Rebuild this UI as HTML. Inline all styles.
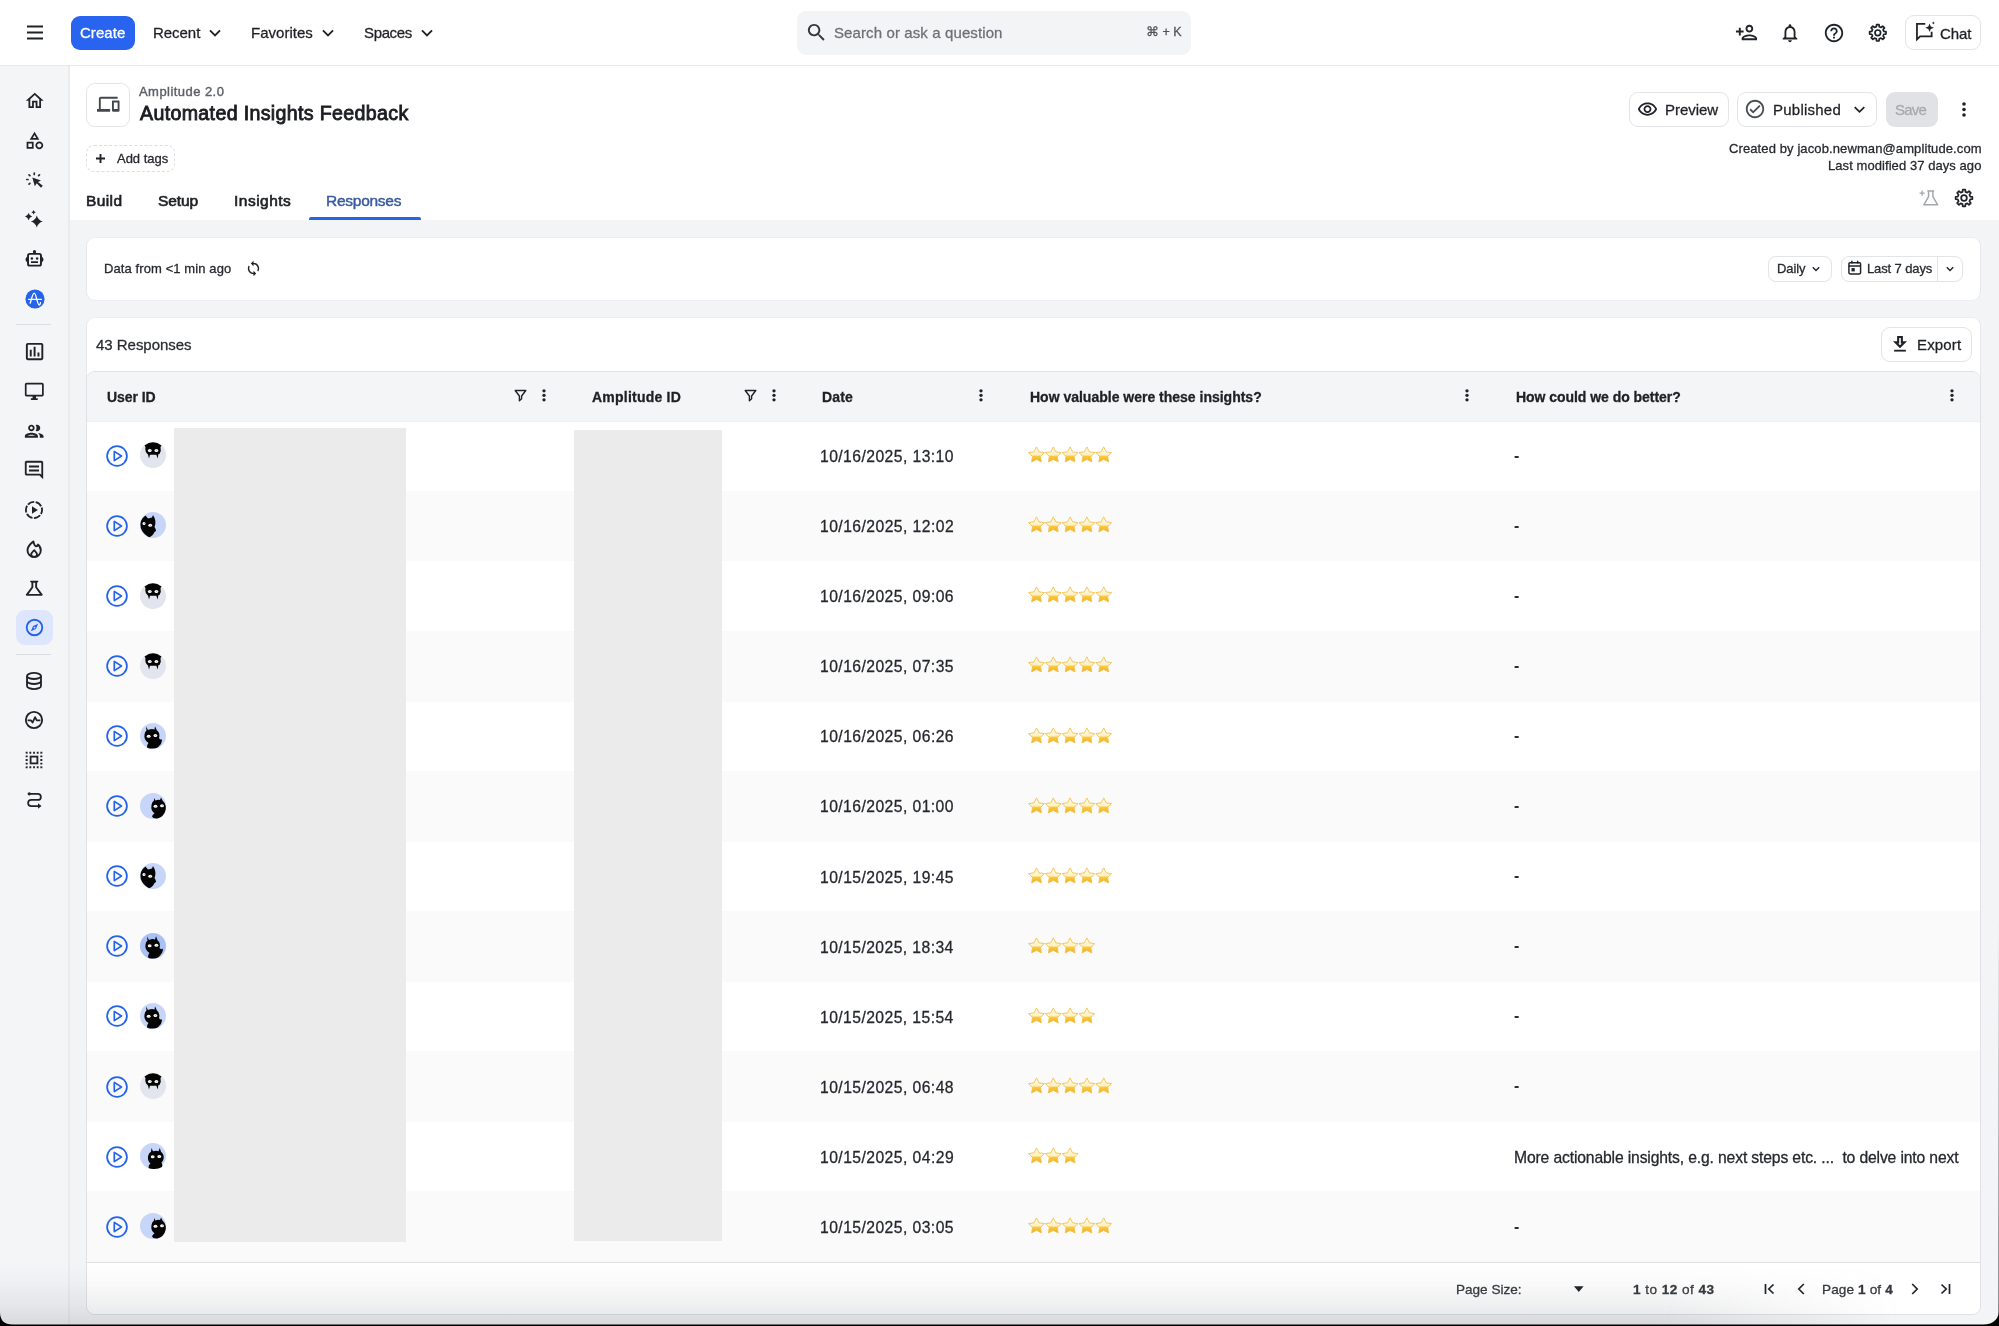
<!DOCTYPE html>
<html lang="en">
<head>
<meta charset="utf-8">
<title>Automated Insights Feedback</title>
<style>
*{box-sizing:border-box;margin:0;padding:0}
html,body{width:1999px;height:1326px;overflow:hidden;background:#fff}
body{font-family:"Liberation Sans",sans-serif;color:#1e2024;position:relative;font-size:16px}
.abs{position:absolute}
.t{position:absolute;white-space:pre;line-height:1;will-change:transform;-webkit-text-stroke:0.28px currentColor}
svg{position:absolute;overflow:visible}
#topbar{position:absolute;left:0;top:0;width:1999px;height:66px;background:#fff;border-bottom:1px solid #e8e9ec}
#sidebar{position:absolute;left:0;top:66px;width:70px;height:1260px;background:#f4f5f7;border-right:2px solid #eaebed}
#head{position:absolute;left:70px;top:66px;width:1929px;height:154px;background:#fff}
#content{position:absolute;left:70px;top:220px;width:1929px;height:1106px;background:#f3f4f6}
.card{position:absolute;background:#fff;border:1px solid #e6e7ea;border-radius:9px}
.btn{position:absolute;border:1px solid #e3e4e7;border-radius:8px;background:#fff}
</style>
</head>
<body>
<div id="topbar"></div>
<div id="sidebar"></div>
<div id="head"></div>
<div id="content"></div>
<div id="tb">
<svg style="left:26px;top:24px" width="18" height="18" viewBox="0 0 18 18" ><path d="M1 2.6H17M1 8.6H17M1 14.6H17" stroke="#1f2328" stroke-width="2" fill="none"/></svg>
<div class="abs" style="left:71px;top:15.500px;width:64px;height:34.800px;border-radius:9px;background:#2864f0"></div>
<div class="t" style="left:79.99px;top:25.30px;font-size:15px;color:#fff;letter-spacing:0.042px;">Create</div>
<div class="t" style="left:153.04px;top:25.30px;font-size:15px;color:#1e2024;letter-spacing:-0.043px;">Recent</div>
<svg style="left:203.5px;top:21.5px" width="22" height="22" viewBox="0 0 24 24" ><path d="M6.5 9.2 L12 14.7 L17.5 9.2" fill="none" stroke="#1f2328" stroke-width="2" /></svg>
<div class="t" style="left:251.04px;top:25.30px;font-size:15px;color:#1e2024;letter-spacing:0.007px;">Favorites</div>
<svg style="left:316.5px;top:21.5px" width="22" height="22" viewBox="0 0 24 24" ><path d="M6.5 9.2 L12 14.7 L17.5 9.2" fill="none" stroke="#1f2328" stroke-width="2" /></svg>
<div class="t" style="left:363.56px;top:25.30px;font-size:15px;color:#1e2024;letter-spacing:-0.361px;">Spaces</div>
<svg style="left:415.5px;top:21.5px" width="22" height="22" viewBox="0 0 24 24" ><path d="M6.5 9.2 L12 14.7 L17.5 9.2" fill="none" stroke="#1f2328" stroke-width="2" /></svg>
<div class="abs" style="left:797px;top:11px;width:394px;height:43.5px;border-radius:9px;background:#f3f4f6"></div>
<svg style="left:805.3px;top:20.5px" width="23" height="23" viewBox="0 0 24 24" ><path d="M15.5 14h-.79l-.28-.27C15.41 12.59 16 11.11 16 9.500 16 5.910 13.090 3 9.500 3S3 5.910 3 9.500 5.910 16 9.500 16c1.610 0 3.090-.59 4.230-1.570l.27.28v.79l5 4.990L20.490 19l-4.990-5zm-6 0C7.010 14 5 11.990 5 9.500S7.010 5 9.500 5 14 7.010 14 9.500 11.990 14 9.500 14z" fill="#33363b" /></svg>
<div class="t" style="left:833.57px;top:25.10px;font-size:15px;color:#6d7076;letter-spacing:0.110px;">Search or ask a question</div>
<div class="t" style="left:1146.19px;top:25.92px;font-size:12.5px;color:#50535a;font-family:"Liberation Sans","DejaVu Sans",sans-serif;">⌘ + K</div>
<svg style="left:1735.0px;top:20.8px" width="23" height="23" viewBox="0 0 24 24" ><path d="M15 12c2.210 0 4-1.790 4-4s-1.790-4-4-4-4 1.790-4 4 1.790 4 4 4zm0-6c1.100 0 2 .9 2 2s-.9 2-2 2-2-.9-2-2 .9-2 2-2zm0 8c-2.670 0-8 1.340-8 4v2h16v-2c0-2.660-5.330-4-8-4zm-6 4c.22-.72 3.310-2 6-2 2.700 0 5.800 1.290 6 2H9zm-3-3v-3h3v-2H6V7H4v3H1v2h3v3z" fill="#1f2328" /></svg>
<svg style="left:1779.3px;top:22.1px" width="22" height="22" viewBox="0 0 24 24" ><path d="M12 22c1.1 0 2-.9 2-2h-4c0 1.1.9 2 2 2zm6-6v-5c0-3.07-1.63-5.64-4.5-6.32V4c0-.83-.67-1.5-1.5-1.5s-1.5.67-1.5 1.5v.68C7.64 5.36 6 7.92 6 11v5l-2 2v1h16v-1l-2-2zm-2 1H8v-6c0-2.48 1.51-4.5 4-4.5s4 2.02 4 4.5v6z" fill="#1f2328" /></svg>
<svg style="left:1823.0px;top:21.7px" width="22" height="22" viewBox="0 0 24 24" ><path d="M11 18h2v-2h-2v2zm1-16C6.48 2 2 6.48 2 12s4.48 10 10 10 10-4.48 10-10S17.52 2 12 2zm0 18c-4.41 0-8-3.59-8-8s3.59-8 8-8 8 3.59 8 8-3.59 8-8 8zm0-14c-2.21 0-4 1.79-4 4h2c0-1.1.9-2 2-2s2 .9 2 2c0 2-3 1.75-3 5h2c0-2.25 3-2.5 3-5 0-2.21-1.79-4-4-4z" fill="#1f2328" /></svg>
<svg style="left:1866.9px;top:21.9px" width="21.6" height="21.6" viewBox="0 0 24 24" ><path d="M10.39 5.29 L10.63 2.90 L13.37 2.90 L13.61 5.29 L15.61 6.12 L17.47 4.60 L19.40 6.53 L17.88 8.39 L18.71 10.39 L21.10 10.63 L21.10 13.37 L18.71 13.61 L17.88 15.61 L19.40 17.47 L17.47 19.40 L15.61 17.88 L13.61 18.71 L13.37 21.10 L10.63 21.10 L10.39 18.71 L8.39 17.88 L6.53 19.40 L4.60 17.47 L6.12 15.61 L5.29 13.61 L2.90 13.37 L2.90 10.63 L5.29 10.39 L6.12 8.39 L4.60 6.53 L6.53 4.60 L8.39 6.12Z" fill="none" stroke="#1f2328" stroke-width="1.9" stroke-linejoin="round"/><circle cx="12" cy="12" r="3.1" fill="none" stroke="#1f2328" stroke-width="1.9"/></svg>
<div class="btn" style="left:1904.5px;top:15px;width:76.5px;height:35px;border-radius:9px"></div>
<svg style="left:1913.2px;top:20.3px" width="22.6" height="22.6" viewBox="0 0 24 24" ><path d="M13 4.2H4.2V20.6L7.6 17.4H19.8V12.6" fill="none" stroke="#1f2328" stroke-width="1.9"/><path d="M17.6 3.6 L18.9 6.9 L22.2 8.2 L18.9 9.5 L17.600 12.800 L16.300 9.500 L13 8.200 L16.300 6.900Z" fill="#1f2328"/><path d="M21.6 1.4l.5 1.200 1.200.5-1.200.5-.5 1.200-.5-1.200-1.200-.5 1.200-.5z" fill="#1f2328"/></svg>
<div class="t" style="left:1939.99px;top:25.60px;font-size:15px;color:#1e2024;letter-spacing:-0.114px;">Chat</div>
</div>
<div id="sb">
<svg style="left:23.85px;top:89.65px" width="21.5" height="21.5" viewBox="0 0 24 24" ><path d="M12 5.69l5 4.5V18h-2v-6H9v6H7v-7.81l5-4.5M12 3L2 12h3v8h6v-6h2v6h6v-8h3L12 3z" fill="#1f2328" /></svg>
<svg style="left:24.1px;top:129.8px" width="21" height="21" viewBox="0 0 24 24" ><path d="M12 2l-5.5 9h11L12 2zm0 3.84L13.93 9h-3.87L12 5.84zM17.5 13c-2.49 0-4.5 2.01-4.5 4.5s2.01 4.5 4.5 4.5 4.5-2.01 4.5-4.5-2.01-4.5-4.5-4.5zm0 7c-1.38 0-2.5-1.12-2.5-2.5s1.12-2.5 2.5-2.5 2.5 1.12 2.5 2.5-1.12 2.5-2.5 2.5zM3 21.5h8v-8H3v8zm2-6h4v4H5v-4z" fill="#1f2328" /></svg>
<svg style="left:20px;top:165px" width="30" height="30" viewBox="0 0 30 30" ><path d="M12.300 12.500 L21 15.600 L18 17 L22.800 20.800 L21 22.700 L16.700 18.300 L14.800 21.200 Z" fill="#23272c"/><path d="M14.250 8.100V9.400 M9 9.800L9.900 10.700 M6.800 14.500H8 M9 19.200L9.900 18.300 M18.600 10.700L19.500 9.800" stroke="#2a2e34" stroke-width="1.700" fill="none" stroke-linecap="round"/></svg>
<svg style="left:24.8px;top:210.2px" width="18" height="18" viewBox="0 0 18 18" ><path d="M11.8 5.6 Q13.120000000000001 10.28 17.8 11.6 Q13.120000000000001 12.92 11.8 17.6 Q10.48 12.92 5.800000000000001 11.6 Q10.48 10.28 11.8 5.6Z" fill="#1f2328"/><path d="M3.6 2.9999999999999996 Q4.392 5.808 7.2 6.6 Q4.392 7.3919999999999995 3.6 10.2 Q2.808 7.3919999999999995 0.0 6.6 Q2.808 5.808 3.6 2.9999999999999996Z" fill="#1f2328"/><path d="M8.6 0.0 Q9.084 1.7160000000000002 10.8 2.2 Q9.084 2.684 8.6 4.4 Q8.116 2.684 6.3999999999999995 2.2 Q8.116 1.7160000000000002 8.6 0.0Z" fill="#1f2328"/></svg>
<svg style="left:23.6px;top:249px" width="21" height="21" viewBox="0 0 24 24" ><rect x="4.600" y="5.600" width="14.800" height="13.400" rx="2" fill="none" stroke="#1f2328" stroke-width="2.200"/><path d="M12 5V3" stroke="#1f2328" stroke-width="2.200"/><circle cx="12" cy="3" r="1.800" fill="#1f2328"/><path d="M3.600 9.500 Q1 12 3.600 14.500Z M20.400 9.500 Q23 12 20.400 14.500Z" fill="#1f2328" stroke="#1f2328" stroke-width="1.200"/><circle cx="9" cy="10.800" r="1.400" fill="#1f2328"/><circle cx="15" cy="10.800" r="1.400" fill="#1f2328"/><rect x="8" y="14" width="8" height="2" fill="#1f2328"/></svg>
<svg style="left:24.7px;top:288.7px" width="20" height="20" viewBox="0 0 20 20" ><circle cx="10" cy="10" r="9.600" fill="#2563eb"/><path d="M3.600 10.300H16.400" stroke="#fff" stroke-width="1.300" fill="none" stroke-linecap="round"/><path d="M5.200 14.200 C6.800 9 7.800 4.200 9.200 4.200 C11.200 4.200 12.200 16 14.200 16 C15 16 15.300 14.800 15.500 13.600" stroke="#fff" stroke-width="1.300" fill="none" stroke-linecap="round"/></svg>
<div class="abs" style="left:16px;top:324px;width:35px;height:1px;background:#dcdde1"></div>
<svg style="left:22.5px;top:340.1px" width="23.2" height="23.2" viewBox="0 0 24 24" ><path d="M9 17H7v-7h2v7zm4 0h-2V7h2v10zm4 0h-2v-4h2v4zm2 2H5V5h14v14zm0-16H5c-1.1 0-2 .9-2 2v14c0 1.1.9 2 2 2h14c1.1 0 2-.9 2-2V5c0-1.1-.9-2-2-2z" fill="#1f2328" /></svg>
<svg style="left:23.8px;top:381.0px" width="20.6" height="20.6" viewBox="0 0 24 24" ><path d="M21 2H3c-1.1 0-2 .9-2 2v12c0 1.1.9 2 2 2h7v2H8v2h8v-2h-2v-2h7c1.1 0 2-.9 2-2V4c0-1.1-.9-2-2-2zm0 14H3V4h18v12z" fill="#1f2328" /></svg>
<svg style="left:23.2px;top:420.1px" width="22.4" height="22.4" viewBox="0 0 24 24" ><path d="M9 13.75c-2.34 0-7 1.17-7 3.5V19h14v-1.75c0-2.33-4.66-3.5-7-3.5zM4.34 17c.84-.58 2.87-1.25 4.66-1.25s3.82.67 4.66 1.25H4.34zM9 12c1.93 0 3.5-1.57 3.5-3.5S10.930 5 9 5 5.5 6.57 5.5 8.5 7.07 12 9 12zm0-5c.83 0 1.5.67 1.5 1.5S9.83 10 9 10s-1.500-.67-1.500-1.500S8.17 7 9 7zm7.040 6.810c1.160.84 1.960 1.960 1.960 3.440V19h4v-1.750c0-2.020-3.500-3.170-5.960-3.440zM15 12c1.930 0 3.500-1.570 3.500-3.500S16.930 5 15 5c-.54 0-1.040.13-1.500.35.630.89 1 1.980 1 3.150s-.37 2.260-1 3.150c.46.22.96.35 1.500.35z" fill="#1f2328" /></svg>
<svg style="left:23.1px;top:459.0px" width="22" height="22" viewBox="0 0 24 24" ><path d="M21.990 4c0-1.100-.89-2-1.990-2H4c-1.100 0-2 .9-2 2v12c0 1.100.9 2 2 2h14l4 4-.010-18zM20 4v13.170L18.830 16H4V4h16zM6.500 11.500h11v2h-11zm0-4.300h11v2h-11z" fill="#1f2328" /></svg>
<svg style="left:23.1px;top:498.7px" width="22" height="22" viewBox="0 0 24 24" ><circle cx="12" cy="12" r="8.800" fill="none" stroke="#1f2328" stroke-width="2" stroke-dasharray="7.600 1.610" stroke-dashoffset="3"/><path d="M9.800 7.800V16.200L16.200 12Z" fill="#1f2328"/></svg>
<svg style="left:20px;top:535px" width="30" height="30" viewBox="0 0 30 30" ><path d="M13.400 6.400 C11 8.500 7.500 11 7.500 15.200 C7.500 19 10.400 21.900 14.100 21.900 C17.900 21.900 20.800 19 20.800 15.200 C20.800 12.800 19.700 10.900 17.900 9.500 C17.600 10.800 16.800 11.400 15.900 11.200 C14.400 10.900 14 9.200 13.400 6.400 Z" fill="none" stroke="#1f2328" stroke-width="1.900" stroke-linejoin="round"/><path d="M14.300 15.200 C13 16.600 11.200 17.800 11.200 19.400 C11.200 20.900 12.500 21.900 14.100 21.900 C15.700 21.900 17 20.900 17 19.400 C17 17.800 15.600 16.600 14.300 15.200Z" fill="none" stroke="#1f2328" stroke-width="1.800" stroke-linejoin="round"/></svg>
<svg style="left:23.25px;top:576.85px" width="22.5" height="22.5" viewBox="0 0 24 24" ><path d="M13 11.33L18 18H6l5-6.670V6h2m2.960-2H8.040c-.42 0-.65.48-.39.81L9 6.500v4.170L3.200 18.400c-.49.66-.02 1.600.8 1.600h16c.82 0 1.290-.94.8-1.600L15 10.670V6.500l1.350-1.690c.26-.33.030-.81-.39-.81z" fill="#1f2328" /></svg>
<div class="abs" style="left:16px;top:610px;width:37px;height:35px;border-radius:9px;background:#dde6fc"></div>
<svg style="left:23.6px;top:617.0px" width="21" height="21" viewBox="0 0 24 24" ><circle cx="12" cy="12" r="8.900" fill="none" stroke="#2563eb" stroke-width="2.100"/><path d="M16.200 7.800L13.600 13.600L7.800 16.200L10.400 10.400Z" fill="#2563eb"/><circle cx="12" cy="12" r="1" fill="#dde6fc"/></svg>
<div class="abs" style="left:16px;top:654px;width:35px;height:1px;background:#dcdde1"></div>
<svg style="left:23.3px;top:670.2px" width="22" height="22" viewBox="0 0 24 24" ><ellipse cx="12" cy="6.500" rx="7.600" ry="3.300" fill="none" stroke="#1f2328" stroke-width="2"/><path d="M4.400 6.500V17.500C4.400 19.300 8 20.800 12 20.800S19.600 19.300 19.600 17.500V6.500" fill="none" stroke="#1f2328" stroke-width="2"/><path d="M4.400 12C4.400 13.800 8 15.300 12 15.300S19.600 13.800 19.600 12" fill="none" stroke="#1f2328" stroke-width="2"/></svg>
<svg style="left:23.1px;top:709.4px" width="22" height="22" viewBox="0 0 24 24" ><circle cx="12" cy="12" r="8.900" fill="none" stroke="#1f2328" stroke-width="2"/><path d="M5 12.300H8.600L10.400 14.800L13.200 8.800L15 12.300H19" fill="none" stroke="#1f2328" stroke-width="1.900" stroke-linejoin="round"/></svg>
<svg style="left:23.3px;top:748.8px" width="22" height="22" viewBox="0 0 24 24" ><rect x="4" y="4" width="16" height="16" fill="none" stroke="#1f2328" stroke-width="2.200" stroke-dasharray="2 2" stroke-dashoffset="1"/><rect x="8.300" y="8.300" width="7.400" height="7.400" fill="none" stroke="#1f2328" stroke-width="2"/></svg>
<svg style="left:24.2px;top:788.5px" width="21" height="21" viewBox="0 0 24 24" ><path d="M7 5.500H15.500C17.700 5.500 19.300 7 19.300 9C19.300 11 17.700 12.500 15.500 12.500H8.500C6.300 12.500 4.700 14 4.700 16C4.700 18 6.300 19.500 8.500 19.500H16" fill="none" stroke="#1f2328" stroke-width="2"/><path d="M16 16.300L20 19.500L16 22.700Z" fill="#1f2328"/><circle cx="6" cy="5.500" r="1.900" fill="#1f2328"/></svg>
</div>
<div id="hd">
<div class="btn" style="left:86px;top:83px;width:43.5px;height:43.5px;border-radius:9px"></div>
<svg style="left:96.95px;top:93.45px" width="22.5" height="22.5" viewBox="0 0 24 24" ><path d="M4 6h18V4H4c-1.100 0-2 .9-2 2v11H0v3h14v-3H4V6zm19 2h-6c-.55 0-1 .45-1 1v10c0 .55.45 1 1 1h6c.55 0 1-.45 1-1V9c0-.55-.45-1-1-1zm-1 9h-4v-7h4v7z" fill="#44474d" /></svg>
<div class="t" style="left:138.80px;top:84.70px;font-size:13px;color:#5e6167;letter-spacing:0.449px;-webkit-text-stroke:0.4px #5e6167;">Amplitude 2.0</div>
<div class="t" style="left:140.33px;top:104.01px;font-size:19.6px;color:#1b1d21;letter-spacing:0.346px;-webkit-text-stroke:0.85px #1b1d21;">Automated Insights Feedback</div>
<div class="abs" style="left:86px;top:145px;width:89px;height:27px;border:1px dashed #dcdee2;border-radius:8px"></div>
<svg style="left:95.5px;top:154px" width="9" height="9" viewBox="0 0 9 9" ><path d="M4.5 0V9M0 4.5H9" stroke="#1f2328" stroke-width="1.9" fill="none"/></svg>
<div class="t" style="left:117.34px;top:152.00px;font-size:13px;color:#26292e;letter-spacing:-0.020px;">Add tags</div>
<div class="t" style="left:86.19px;top:192.98px;font-size:15.5px;color:#1e2024;letter-spacing:0.403px;-webkit-text-stroke:0.65px #1e2024;">Build</div>
<div class="t" style="left:158.13px;top:192.98px;font-size:15.5px;color:#1e2024;letter-spacing:-0.107px;-webkit-text-stroke:0.65px #1e2024;">Setup</div>
<div class="t" style="left:233.73px;top:192.98px;font-size:15.5px;color:#1e2024;letter-spacing:0.493px;-webkit-text-stroke:0.65px #1e2024;">Insights</div>
<div class="t" style="left:326.29px;top:192.98px;font-size:15.5px;color:#3a5ba0;letter-spacing:-0.263px;-webkit-text-stroke:0.45px #3a5ba0;">Responses</div>
<div class="abs" style="left:308.7px;top:217px;width:112.2px;height:2.800px;background:#2563eb;border-radius:2px 2px 0 0"></div>
<div class="btn" style="left:1629px;top:92px;width:99.5px;height:34.5px;border-radius:9px"></div>
<svg style="left:1636.7px;top:98.7px" width="21" height="21" viewBox="0 0 24 24" ><path d="M12 6c3.790 0 7.170 2.130 8.820 5.500C19.170 14.870 15.790 17 12 17s-7.170-2.130-8.820-5.500C4.830 8.130 8.210 6 12 6m0-2C7 4 2.730 7.110 1 11.500 2.730 15.890 7 19 12 19s9.270-3.110 11-7.500C21.270 7.110 17 4 12 4zm0 5c1.380 0 2.500 1.120 2.500 2.500S13.380 14 12 14s-2.500-1.120-2.500-2.500S10.620 9 12 9m0-2c-2.480 0-4.500 2.020-4.500 4.500S9.520 16 12 16s4.500-2.020 4.500-4.500S14.480 7 12 7z" fill="#1f2328" /></svg>
<div class="t" style="left:1664.54px;top:101.50px;font-size:15px;color:#1e2024;letter-spacing:-0.030px;">Preview</div>
<div class="btn" style="left:1736.5px;top:92px;width:140px;height:34.5px;border-radius:9px"></div>
<svg style="left:1744.1px;top:98.2px" width="22" height="22" viewBox="0 0 24 24" ><path d="M12 2C6.480 2 2 6.480 2 12s4.480 10 10 10 10-4.480 10-10S17.520 2 12 2zm0 18c-4.410 0-8-3.590-8-8s3.590-8 8-8 8 3.590 8 8-3.590 8-8 8zm4.590-12.420L10 14.170l-2.590-2.580L6 13l4 4 8-8z" fill="#4b4e54" /></svg>
<div class="t" style="left:1772.94px;top:101.50px;font-size:15px;color:#1e2024;letter-spacing:0.238px;">Published</div>
<svg style="left:1848.7px;top:98.9px" width="21" height="21" viewBox="0 0 24 24" ><path d="M6.5 9.2 L12 14.7 L17.5 9.2" fill="none" stroke="#1f2328" stroke-width="2" /></svg>
<div class="abs" style="left:1886px;top:92px;width:51.5px;height:34.5px;border-radius:9px;background:#e1e2e5"></div>
<div class="t" style="left:1895.47px;top:101.50px;font-size:15px;color:#a6a9ae;letter-spacing:-0.777px;">Save</div>
<svg style="left:1962px;top:101px" width="4" height="17" viewBox="0 0 4 17" ><circle cx="2" cy="3" r="1.800" fill="#1f2328"/><circle cx="2" cy="8.500" r="1.800" fill="#1f2328"/><circle cx="2" cy="14" r="1.800" fill="#1f2328"/></svg>
<div class="t" style="left:1728.79px;top:141.90px;font-size:13px;color:#26292e;letter-spacing:0.107px;">Created by jacob.newman@amplitude.com</div>
<div class="t" style="left:1827.70px;top:159.30px;font-size:13px;color:#26292e;letter-spacing:0.068px;">Last modified 37 days ago</div>
<svg style="left:1918.5px;top:188px" width="20" height="19" viewBox="0 0 23 22" ><path d="M9.500 3.500H17.500M11 3.500V10L5.500 19.500H21.500L16 10V3.500" fill="none" stroke="#a3a6ab" stroke-width="1.700" stroke-linejoin="round"/><path d="M3.500 3V9M0.500 6H6.500" stroke="#a3a6ab" stroke-width="1.500" fill="none"/></svg>
<svg style="left:1953.0px;top:186.8px" width="22" height="22" viewBox="0 0 24 24" ><path d="M10.39 5.29 L10.63 2.90 L13.37 2.90 L13.61 5.29 L15.61 6.12 L17.47 4.60 L19.40 6.53 L17.88 8.39 L18.71 10.39 L21.10 10.63 L21.10 13.37 L18.71 13.61 L17.88 15.61 L19.40 17.47 L17.47 19.40 L15.61 17.88 L13.61 18.71 L13.37 21.10 L10.63 21.10 L10.39 18.71 L8.39 17.88 L6.53 19.40 L4.60 17.47 L6.12 15.61 L5.29 13.61 L2.90 13.37 L2.90 10.63 L5.29 10.39 L6.12 8.39 L4.60 6.53 L6.53 4.60 L8.39 6.12Z" fill="none" stroke="#1f2328" stroke-width="1.9" stroke-linejoin="round"/><circle cx="12" cy="12" r="3.1" fill="none" stroke="#1f2328" stroke-width="1.9"/></svg>
</div>
<div id="cards">
<svg width="0" height="0" style="left:0;top:0"><defs><linearGradient id="sg" x1="0" y1="0" x2="0" y2="1"><stop offset="0" stop-color="#fffcf0"/><stop offset="0.540" stop-color="#fdf0c4"/><stop offset="0.620" stop-color="#f9ca3a"/><stop offset="1" stop-color="#f1ae24"/></linearGradient></defs></svg>
<div class="card" style="left:86px;top:237px;width:1895px;height:63.600px;border-top-color:#ecedf0;border-bottom-color:#ecedf0"></div>
<div class="t" style="left:103.50px;top:262.00px;font-size:13px;color:#26292e;letter-spacing:0.096px;">Data from &lt;1 min ago</div>
<svg style="left:245.2px;top:260.2px" width="17" height="17" viewBox="0 0 24 24" ><path d="M12 6V3.200L8.200 7 12 10.800V8C15.300 8 18 10.700 18 14C18 15 17.700 16 17.300 16.800L18.800 18.300C19.600 17 20 15.600 20 14C20 9.600 16.400 6 12 6ZM12 20C8.700 20 6 17.300 6 14C6 13 6.300 12 6.700 11.200L5.200 9.700C4.400 11 4 12.400 4 14C4 18.400 7.600 22 12 22V24.800L15.800 21 12 17.200Z" fill="#1f2328" transform="translate(0 -2)"/></svg>
<div class="btn" style="left:1768px;top:256px;width:64px;height:25.500px;border-radius:8px"></div>
<div class="t" style="left:1776.70px;top:262.00px;font-size:13px;color:#26292e;letter-spacing:-0.083px;">Daily</div>
<svg style="left:1809.2px;top:261.6px" width="14" height="14" viewBox="0 0 24 24" ><path d="M6.5 9.2 L12 14.7 L17.5 9.2" fill="none" stroke="#1f2328" stroke-width="2.4" /></svg>
<div class="btn" style="left:1841px;top:256px;width:122px;height:25.500px;border-radius:8px"></div>
<div class="abs" style="left:1937px;top:257px;width:1px;height:23.500px;background:#e3e4e7"></div>
<svg style="left:1846.25px;top:258.75px" width="17.5" height="17.5" viewBox="0 0 24 24" ><rect x="4" y="5" width="16" height="15.500" rx="1.500" fill="none" stroke="#1f2328" stroke-width="2"/><path d="M4 9.500H20 M8 2.500V6 M16 2.500V6" stroke="#1f2328" stroke-width="2" fill="none"/><rect x="7.500" y="12.500" width="4.500" height="4.500" fill="#1f2328"/></svg>
<div class="t" style="left:1866.60px;top:262.00px;font-size:13px;color:#26292e;letter-spacing:-0.118px;">Last 7 days</div>
<svg style="left:1943.2px;top:261.6px" width="14" height="14" viewBox="0 0 24 24" ><path d="M6.5 9.2 L12 14.7 L17.5 9.2" fill="none" stroke="#1f2328" stroke-width="2.4" /></svg>
<div class="card" style="left:86px;top:317px;width:1895px;height:998px;border-top-color:#ecedf0"></div>
<div class="t" style="left:96.20px;top:337.00px;font-size:15px;color:#2a2d32;letter-spacing:-0.028px;">43 Responses</div>
<div class="btn" style="left:1881px;top:327px;width:91px;height:34.500px;border-radius:9px"></div>
<svg style="left:1889.7px;top:334.3px" width="20" height="20" viewBox="0 0 24 24" ><path d="M9.800 3.600H14.200V10H17.400L12 15.400L6.600 10H9.800Z" fill="none" stroke="#1f2328" stroke-width="2.500" stroke-linejoin="miter"/><path d="M5 20H19" stroke="#1f2328" stroke-width="2.200"/></svg>
<div class="t" style="left:1917.34px;top:337.40px;font-size:15px;color:#1e2024;letter-spacing:0.169px;">Export</div>
<div class="abs" style="left:86px;top:371px;width:1895px;height:944px;border:1px solid #dfe1e4;border-radius:9px;overflow:hidden;background:#fff"><div style="height:50px;background:#f4f5f7;border-bottom:1px solid #eeeff1"></div></div>
<div class="t" style="left:107.11px;top:390.15px;font-size:14px;color:#1e2024;letter-spacing:-0.056px;font-weight:bold;-webkit-text-stroke:0.3px #1e2024;">User ID</div>
<svg style="left:513.5999999999999px;top:389.0px" width="13" height="13" viewBox="0 0 13 13" ><path d="M1.200 1.500H11.800L7.600 7V9.800L5.400 11.800V7Z" fill="none" stroke="#1f2328" stroke-width="1.400" stroke-linejoin="round"/></svg>
<svg style="left:541.5px;top:389.3px" width="4" height="13" viewBox="0 0 4 13" ><circle cx="2" cy="1.800" r="1.650" fill="#1f2328"/><circle cx="2" cy="6.300" r="1.650" fill="#1f2328"/><circle cx="2" cy="10.800" r="1.650" fill="#1f2328"/></svg>
<div class="t" style="left:591.50px;top:390.15px;font-size:14px;color:#1e2024;letter-spacing:0.224px;font-weight:bold;-webkit-text-stroke:0.3px #1e2024;">Amplitude ID</div>
<svg style="left:743.6999999999999px;top:389.0px" width="13" height="13" viewBox="0 0 13 13" ><path d="M1.200 1.500H11.800L7.600 7V9.800L5.400 11.800V7Z" fill="none" stroke="#1f2328" stroke-width="1.400" stroke-linejoin="round"/></svg>
<svg style="left:771.5px;top:389.3px" width="4" height="13" viewBox="0 0 4 13" ><circle cx="2" cy="1.800" r="1.650" fill="#1f2328"/><circle cx="2" cy="6.300" r="1.650" fill="#1f2328"/><circle cx="2" cy="10.800" r="1.650" fill="#1f2328"/></svg>
<div class="t" style="left:821.84px;top:390.15px;font-size:14px;color:#1e2024;letter-spacing:0.173px;font-weight:bold;-webkit-text-stroke:0.3px #1e2024;">Date</div>
<svg style="left:979.3px;top:389.3px" width="4" height="13" viewBox="0 0 4 13" ><circle cx="2" cy="1.800" r="1.650" fill="#1f2328"/><circle cx="2" cy="6.300" r="1.650" fill="#1f2328"/><circle cx="2" cy="10.800" r="1.650" fill="#1f2328"/></svg>
<div class="t" style="left:1029.84px;top:390.15px;font-size:14px;color:#1e2024;letter-spacing:-0.005px;font-weight:bold;-webkit-text-stroke:0.3px #1e2024;">How valuable were these insights?</div>
<svg style="left:1464.7px;top:389.3px" width="4" height="13" viewBox="0 0 4 13" ><circle cx="2" cy="1.800" r="1.650" fill="#1f2328"/><circle cx="2" cy="6.300" r="1.650" fill="#1f2328"/><circle cx="2" cy="10.800" r="1.650" fill="#1f2328"/></svg>
<div class="t" style="left:1515.84px;top:390.15px;font-size:14px;color:#1e2024;letter-spacing:-0.044px;font-weight:bold;-webkit-text-stroke:0.3px #1e2024;">How could we do better?</div>
<svg style="left:1950.3px;top:389.3px" width="4" height="13" viewBox="0 0 4 13" ><circle cx="2" cy="1.800" r="1.650" fill="#1f2328"/><circle cx="2" cy="6.300" r="1.650" fill="#1f2328"/><circle cx="2" cy="10.800" r="1.650" fill="#1f2328"/></svg>
<svg style="left:106.1px;top:444.7px" width="22" height="22" viewBox="0 0 22 22" ><circle cx="11" cy="11" r="9.900" fill="none" stroke="#2563eb" stroke-width="1.750"/><path d="M8.300 6.400V15.600L15.500 11Z" fill="none" stroke="#2563eb" stroke-width="1.700" stroke-linejoin="round"/></svg>
<svg style="left:139.8px;top:442.3px" width="26" height="26" viewBox="0 0 26 26" ><circle cx="13" cy="13" r="13" fill="#e3e5ee"/><path d="M4.500 3.500 Q13 -3 21.500 3.500 L20.500 5 Q21.500 9 19.500 12 L18.300 12.300 L17.800 16.500 L16.300 12.800 L10 12.800 L9 16.500 L8 12.500 Q4.500 9.500 5.500 5 Z" fill="#050505"/><ellipse cx="9.8" cy="8.5" rx="1.9" ry="1.5" fill="#fff"/><circle cx="10.100000000000001" cy="8.5" r="0.500" fill="#999"/><ellipse cx="16.4" cy="8.5" rx="1.9" ry="1.5" fill="#fff"/><circle cx="16.7" cy="8.5" r="0.500" fill="#999"/></svg>
<div class="t" style="left:819.56px;top:449.01px;font-size:15.7px;color:#25282d;letter-spacing:0.438px;">10/16/2025, 13:10</div>
<svg style="left:1027.7px;top:446.1px" width="84.2" height="18" viewBox="0 0 84.2 18" ><path d="M8.50 0.90 L10.97 5.80 L16.39 6.64 L12.49 10.50 L13.38 15.91 L8.50 13.40 L3.62 15.91 L4.51 10.50 L0.61 6.64 L6.03 5.80Z" fill="url(#sg)" stroke="#f3c24d" stroke-width="0.900" stroke-linejoin="round"/><path d="M25.30 0.90 L27.77 5.80 L33.19 6.64 L29.29 10.50 L30.18 15.91 L25.30 13.40 L20.42 15.91 L21.31 10.50 L17.41 6.64 L22.83 5.80Z" fill="url(#sg)" stroke="#f3c24d" stroke-width="0.900" stroke-linejoin="round"/><path d="M42.10 0.90 L44.57 5.80 L49.99 6.64 L46.09 10.50 L46.98 15.91 L42.10 13.40 L37.22 15.91 L38.11 10.50 L34.21 6.64 L39.63 5.80Z" fill="url(#sg)" stroke="#f3c24d" stroke-width="0.900" stroke-linejoin="round"/><path d="M58.90 0.90 L61.37 5.80 L66.79 6.64 L62.89 10.50 L63.78 15.91 L58.90 13.40 L54.02 15.91 L54.91 10.50 L51.01 6.64 L56.43 5.80Z" fill="url(#sg)" stroke="#f3c24d" stroke-width="0.900" stroke-linejoin="round"/><path d="M75.70 0.90 L78.17 5.80 L83.59 6.64 L79.69 10.50 L80.58 15.91 L75.70 13.40 L70.82 15.91 L71.71 10.50 L67.81 6.64 L73.23 5.80Z" fill="url(#sg)" stroke="#f3c24d" stroke-width="0.900" stroke-linejoin="round"/></svg>
<div class="t" style="left:1514.00px;top:447.56px;font-size:16px;color:#2b2e34;font-weight:bold;-webkit-text-stroke:0;">-</div>
<div class="abs" style="left:87px;top:490.59px;width:1893px;height:70.9px;background:#fafafa"></div>
<svg style="left:106.1px;top:514.8px" width="22" height="22" viewBox="0 0 22 22" ><circle cx="11" cy="11" r="9.900" fill="none" stroke="#2563eb" stroke-width="1.750"/><path d="M8.300 6.400V15.600L15.500 11Z" fill="none" stroke="#2563eb" stroke-width="1.700" stroke-linejoin="round"/></svg>
<svg style="left:139.8px;top:512.4px" width="26" height="26" viewBox="0 0 26 26" ><circle cx="13" cy="13" r="13" fill="#c7d5f8"/><path d="M5.500 3.500 L8 6.500 L12 5.500 L13 3 Q17 9 14.500 15 Q16 17 16 19 L14.500 20 Q13 24 9 25.300 Q3 22 0.800 16 Q-1 8 5.500 3.500Z" fill="#050505"/><ellipse cx="4" cy="11.5" rx="1.5" ry="1.5" fill="#fff"/><circle cx="4.3" cy="11.5" r="0.500" fill="#999"/><ellipse cx="10.2" cy="13.2" rx="1.9" ry="1.5" fill="#fff"/><circle cx="10.5" cy="13.2" r="0.500" fill="#999"/></svg>
<div class="t" style="left:819.56px;top:519.10px;font-size:15.7px;color:#25282d;letter-spacing:0.448px;">10/16/2025, 12:02</div>
<svg style="left:1027.7px;top:516.2px" width="84.2" height="18" viewBox="0 0 84.2 18" ><path d="M8.50 0.90 L10.97 5.80 L16.39 6.64 L12.49 10.50 L13.38 15.91 L8.50 13.40 L3.62 15.91 L4.51 10.50 L0.61 6.64 L6.03 5.80Z" fill="url(#sg)" stroke="#f3c24d" stroke-width="0.900" stroke-linejoin="round"/><path d="M25.30 0.90 L27.77 5.80 L33.19 6.64 L29.29 10.50 L30.18 15.91 L25.30 13.40 L20.42 15.91 L21.31 10.50 L17.41 6.64 L22.83 5.80Z" fill="url(#sg)" stroke="#f3c24d" stroke-width="0.900" stroke-linejoin="round"/><path d="M42.10 0.90 L44.57 5.80 L49.99 6.64 L46.09 10.50 L46.98 15.91 L42.10 13.40 L37.22 15.91 L38.11 10.50 L34.21 6.64 L39.63 5.80Z" fill="url(#sg)" stroke="#f3c24d" stroke-width="0.900" stroke-linejoin="round"/><path d="M58.90 0.90 L61.37 5.80 L66.79 6.64 L62.89 10.50 L63.78 15.91 L58.90 13.40 L54.02 15.91 L54.91 10.50 L51.01 6.64 L56.43 5.80Z" fill="url(#sg)" stroke="#f3c24d" stroke-width="0.900" stroke-linejoin="round"/><path d="M75.70 0.90 L78.17 5.80 L83.59 6.64 L79.69 10.50 L80.58 15.91 L75.70 13.40 L70.82 15.91 L71.71 10.50 L67.81 6.64 L73.23 5.80Z" fill="url(#sg)" stroke="#f3c24d" stroke-width="0.900" stroke-linejoin="round"/></svg>
<div class="t" style="left:1514.00px;top:517.65px;font-size:16px;color:#2b2e34;font-weight:bold;-webkit-text-stroke:0;">-</div>
<svg style="left:106.1px;top:584.9px" width="22" height="22" viewBox="0 0 22 22" ><circle cx="11" cy="11" r="9.900" fill="none" stroke="#2563eb" stroke-width="1.750"/><path d="M8.300 6.400V15.600L15.500 11Z" fill="none" stroke="#2563eb" stroke-width="1.700" stroke-linejoin="round"/></svg>
<svg style="left:139.8px;top:582.5px" width="26" height="26" viewBox="0 0 26 26" ><circle cx="13" cy="13" r="13" fill="#e3e5ee"/><path d="M4.500 3.500 Q13 -3 21.500 3.500 L20.500 5 Q21.500 9 19.500 12 L18.300 12.300 L17.800 16.500 L16.300 12.800 L10 12.800 L9 16.500 L8 12.500 Q4.500 9.500 5.500 5 Z" fill="#050505"/><ellipse cx="9.8" cy="8.5" rx="1.9" ry="1.5" fill="#fff"/><circle cx="10.100000000000001" cy="8.5" r="0.500" fill="#999"/><ellipse cx="16.4" cy="8.5" rx="1.9" ry="1.5" fill="#fff"/><circle cx="16.7" cy="8.5" r="0.500" fill="#999"/></svg>
<div class="t" style="left:819.56px;top:589.19px;font-size:15.7px;color:#25282d;letter-spacing:0.443px;">10/16/2025, 09:06</div>
<svg style="left:1027.7px;top:586.3px" width="84.2" height="18" viewBox="0 0 84.2 18" ><path d="M8.50 0.90 L10.97 5.80 L16.39 6.64 L12.49 10.50 L13.38 15.91 L8.50 13.40 L3.62 15.91 L4.51 10.50 L0.61 6.64 L6.03 5.80Z" fill="url(#sg)" stroke="#f3c24d" stroke-width="0.900" stroke-linejoin="round"/><path d="M25.30 0.90 L27.77 5.80 L33.19 6.64 L29.29 10.50 L30.18 15.91 L25.30 13.40 L20.42 15.91 L21.31 10.50 L17.41 6.64 L22.83 5.80Z" fill="url(#sg)" stroke="#f3c24d" stroke-width="0.900" stroke-linejoin="round"/><path d="M42.10 0.90 L44.57 5.80 L49.99 6.64 L46.09 10.50 L46.98 15.91 L42.10 13.40 L37.22 15.91 L38.11 10.50 L34.21 6.64 L39.63 5.80Z" fill="url(#sg)" stroke="#f3c24d" stroke-width="0.900" stroke-linejoin="round"/><path d="M58.90 0.90 L61.37 5.80 L66.79 6.64 L62.89 10.50 L63.78 15.91 L58.90 13.40 L54.02 15.91 L54.91 10.50 L51.01 6.64 L56.43 5.80Z" fill="url(#sg)" stroke="#f3c24d" stroke-width="0.900" stroke-linejoin="round"/><path d="M75.70 0.90 L78.17 5.80 L83.59 6.64 L79.69 10.50 L80.58 15.91 L75.70 13.40 L70.82 15.91 L71.71 10.50 L67.81 6.64 L73.23 5.80Z" fill="url(#sg)" stroke="#f3c24d" stroke-width="0.900" stroke-linejoin="round"/></svg>
<div class="t" style="left:1514.00px;top:587.74px;font-size:16px;color:#2b2e34;font-weight:bold;-webkit-text-stroke:0;">-</div>
<div class="abs" style="left:87px;top:630.77px;width:1893px;height:70.9px;background:#fafafa"></div>
<svg style="left:106.1px;top:655.0px" width="22" height="22" viewBox="0 0 22 22" ><circle cx="11" cy="11" r="9.900" fill="none" stroke="#2563eb" stroke-width="1.750"/><path d="M8.300 6.400V15.600L15.500 11Z" fill="none" stroke="#2563eb" stroke-width="1.700" stroke-linejoin="round"/></svg>
<svg style="left:139.8px;top:652.6px" width="26" height="26" viewBox="0 0 26 26" ><circle cx="13" cy="13" r="13" fill="#e3e5ee"/><path d="M4.500 3.500 Q13 -3 21.500 3.500 L20.500 5 Q21.500 9 19.500 12 L18.300 12.300 L17.800 16.500 L16.300 12.800 L10 12.800 L9 16.500 L8 12.500 Q4.500 9.500 5.500 5 Z" fill="#050505"/><ellipse cx="9.8" cy="8.5" rx="1.9" ry="1.5" fill="#fff"/><circle cx="10.100000000000001" cy="8.5" r="0.500" fill="#999"/><ellipse cx="16.4" cy="8.5" rx="1.9" ry="1.5" fill="#fff"/><circle cx="16.7" cy="8.5" r="0.500" fill="#999"/></svg>
<div class="t" style="left:819.56px;top:659.28px;font-size:15.7px;color:#25282d;letter-spacing:0.440px;">10/16/2025, 07:35</div>
<svg style="left:1027.7px;top:656.4px" width="84.2" height="18" viewBox="0 0 84.2 18" ><path d="M8.50 0.90 L10.97 5.80 L16.39 6.64 L12.49 10.50 L13.38 15.91 L8.50 13.40 L3.62 15.91 L4.51 10.50 L0.61 6.64 L6.03 5.80Z" fill="url(#sg)" stroke="#f3c24d" stroke-width="0.900" stroke-linejoin="round"/><path d="M25.30 0.90 L27.77 5.80 L33.19 6.64 L29.29 10.50 L30.18 15.91 L25.30 13.40 L20.42 15.91 L21.31 10.50 L17.41 6.64 L22.83 5.80Z" fill="url(#sg)" stroke="#f3c24d" stroke-width="0.900" stroke-linejoin="round"/><path d="M42.10 0.90 L44.57 5.80 L49.99 6.64 L46.09 10.50 L46.98 15.91 L42.10 13.40 L37.22 15.91 L38.11 10.50 L34.21 6.64 L39.63 5.80Z" fill="url(#sg)" stroke="#f3c24d" stroke-width="0.900" stroke-linejoin="round"/><path d="M58.90 0.90 L61.37 5.80 L66.79 6.64 L62.89 10.50 L63.78 15.91 L58.90 13.40 L54.02 15.91 L54.91 10.50 L51.01 6.64 L56.43 5.80Z" fill="url(#sg)" stroke="#f3c24d" stroke-width="0.900" stroke-linejoin="round"/><path d="M75.70 0.90 L78.17 5.80 L83.59 6.64 L79.69 10.50 L80.58 15.91 L75.70 13.40 L70.82 15.91 L71.71 10.50 L67.81 6.64 L73.23 5.80Z" fill="url(#sg)" stroke="#f3c24d" stroke-width="0.900" stroke-linejoin="round"/></svg>
<div class="t" style="left:1514.00px;top:657.83px;font-size:16px;color:#2b2e34;font-weight:bold;-webkit-text-stroke:0;">-</div>
<svg style="left:106.1px;top:725.1px" width="22" height="22" viewBox="0 0 22 22" ><circle cx="11" cy="11" r="9.900" fill="none" stroke="#2563eb" stroke-width="1.750"/><path d="M8.300 6.400V15.600L15.500 11Z" fill="none" stroke="#2563eb" stroke-width="1.700" stroke-linejoin="round"/></svg>
<svg style="left:139.8px;top:722.7px" width="26" height="26" viewBox="0 0 26 26" ><circle cx="13" cy="13" r="13" fill="#c7d5f8"/><path d="M6 3.500 L8 7 Q12 5.500 14.500 6.500 L15 3.200 L16.800 7.300 Q20.500 10 19 15 Q20.500 17.500 21.500 16 L22 17.500 Q21.500 21 19.500 22.500 Q18 25.500 13 25.500 Q7 25.500 7 24 Q7 21.500 8.500 20 Q3.500 17 4.500 11.500 Q5 8.500 6.500 7.500Z" fill="#050505"/><ellipse cx="8.7" cy="13.2" rx="1.9" ry="1.5" fill="#fff"/><circle cx="9.0" cy="13.2" r="0.500" fill="#999"/><ellipse cx="15.4" cy="12.5" rx="1.9" ry="1.5" fill="#fff"/><circle cx="15.700000000000001" cy="12.5" r="0.500" fill="#999"/></svg>
<div class="t" style="left:819.56px;top:729.37px;font-size:15.7px;color:#25282d;letter-spacing:0.443px;">10/16/2025, 06:26</div>
<svg style="left:1027.7px;top:726.5px" width="84.2" height="18" viewBox="0 0 84.2 18" ><path d="M8.50 0.90 L10.97 5.80 L16.39 6.64 L12.49 10.50 L13.38 15.91 L8.50 13.40 L3.62 15.91 L4.51 10.50 L0.61 6.64 L6.03 5.80Z" fill="url(#sg)" stroke="#f3c24d" stroke-width="0.900" stroke-linejoin="round"/><path d="M25.30 0.90 L27.77 5.80 L33.19 6.64 L29.29 10.50 L30.18 15.91 L25.30 13.40 L20.42 15.91 L21.31 10.50 L17.41 6.64 L22.83 5.80Z" fill="url(#sg)" stroke="#f3c24d" stroke-width="0.900" stroke-linejoin="round"/><path d="M42.10 0.90 L44.57 5.80 L49.99 6.64 L46.09 10.50 L46.98 15.91 L42.10 13.40 L37.22 15.91 L38.11 10.50 L34.21 6.64 L39.63 5.80Z" fill="url(#sg)" stroke="#f3c24d" stroke-width="0.900" stroke-linejoin="round"/><path d="M58.90 0.90 L61.37 5.80 L66.79 6.64 L62.89 10.50 L63.78 15.91 L58.90 13.40 L54.02 15.91 L54.91 10.50 L51.01 6.64 L56.43 5.80Z" fill="url(#sg)" stroke="#f3c24d" stroke-width="0.900" stroke-linejoin="round"/><path d="M75.70 0.90 L78.17 5.80 L83.59 6.64 L79.69 10.50 L80.58 15.91 L75.70 13.40 L70.82 15.91 L71.71 10.50 L67.81 6.64 L73.23 5.80Z" fill="url(#sg)" stroke="#f3c24d" stroke-width="0.900" stroke-linejoin="round"/></svg>
<div class="t" style="left:1514.00px;top:727.92px;font-size:16px;color:#2b2e34;font-weight:bold;-webkit-text-stroke:0;">-</div>
<div class="abs" style="left:87px;top:770.95px;width:1893px;height:70.9px;background:#fafafa"></div>
<svg style="left:106.1px;top:795.1px" width="22" height="22" viewBox="0 0 22 22" ><circle cx="11" cy="11" r="9.900" fill="none" stroke="#2563eb" stroke-width="1.750"/><path d="M8.300 6.400V15.600L15.500 11Z" fill="none" stroke="#2563eb" stroke-width="1.700" stroke-linejoin="round"/></svg>
<svg style="left:139.8px;top:792.8px" width="26" height="26" viewBox="0 0 26 26" ><circle cx="13" cy="13" r="13" fill="#c7d5f8"/><path d="M14 5 L15.500 7.500 Q18 6.500 20 7 L21 4.500 L22.500 7.500 Q27.500 12 25 19 Q23 24 17.500 25.500 Q13 26 12 23.500 Q12.500 21.500 14.500 20.500 Q10.500 17.500 11.500 12 Q12 8.500 14 7.500Z" fill="#050505"/><ellipse cx="15.5" cy="13.2" rx="1.9" ry="1.5" fill="#fff"/><circle cx="15.8" cy="13.2" r="0.500" fill="#999"/><ellipse cx="22" cy="12.8" rx="1.9" ry="1.5" fill="#fff"/><circle cx="22.3" cy="12.8" r="0.500" fill="#999"/></svg>
<div class="t" style="left:819.56px;top:799.46px;font-size:15.7px;color:#25282d;letter-spacing:0.438px;">10/16/2025, 01:00</div>
<svg style="left:1027.7px;top:796.5px" width="84.2" height="18" viewBox="0 0 84.2 18" ><path d="M8.50 0.90 L10.97 5.80 L16.39 6.64 L12.49 10.50 L13.38 15.91 L8.50 13.40 L3.62 15.91 L4.51 10.50 L0.61 6.64 L6.03 5.80Z" fill="url(#sg)" stroke="#f3c24d" stroke-width="0.900" stroke-linejoin="round"/><path d="M25.30 0.90 L27.77 5.80 L33.19 6.64 L29.29 10.50 L30.18 15.91 L25.30 13.40 L20.42 15.91 L21.31 10.50 L17.41 6.64 L22.83 5.80Z" fill="url(#sg)" stroke="#f3c24d" stroke-width="0.900" stroke-linejoin="round"/><path d="M42.10 0.90 L44.57 5.80 L49.99 6.64 L46.09 10.50 L46.98 15.91 L42.10 13.40 L37.22 15.91 L38.11 10.50 L34.21 6.64 L39.63 5.80Z" fill="url(#sg)" stroke="#f3c24d" stroke-width="0.900" stroke-linejoin="round"/><path d="M58.90 0.90 L61.37 5.80 L66.79 6.64 L62.89 10.50 L63.78 15.91 L58.90 13.40 L54.02 15.91 L54.91 10.50 L51.01 6.64 L56.43 5.80Z" fill="url(#sg)" stroke="#f3c24d" stroke-width="0.900" stroke-linejoin="round"/><path d="M75.70 0.90 L78.17 5.80 L83.59 6.64 L79.69 10.50 L80.58 15.91 L75.70 13.40 L70.82 15.91 L71.71 10.50 L67.81 6.64 L73.23 5.80Z" fill="url(#sg)" stroke="#f3c24d" stroke-width="0.900" stroke-linejoin="round"/></svg>
<div class="t" style="left:1514.00px;top:798.01px;font-size:16px;color:#2b2e34;font-weight:bold;-webkit-text-stroke:0;">-</div>
<svg style="left:106.1px;top:865.2px" width="22" height="22" viewBox="0 0 22 22" ><circle cx="11" cy="11" r="9.900" fill="none" stroke="#2563eb" stroke-width="1.750"/><path d="M8.300 6.400V15.600L15.500 11Z" fill="none" stroke="#2563eb" stroke-width="1.700" stroke-linejoin="round"/></svg>
<svg style="left:139.8px;top:862.8px" width="26" height="26" viewBox="0 0 26 26" ><circle cx="13" cy="13" r="13" fill="#c7d5f8"/><path d="M5.500 3.500 L8 6.500 L12 5.500 L13 3 Q17 9 14.500 15 Q16 17 16 19 L14.500 20 Q13 24 9 25.300 Q3 22 0.800 16 Q-1 8 5.500 3.500Z" fill="#050505"/><ellipse cx="4" cy="11.5" rx="1.5" ry="1.5" fill="#fff"/><circle cx="4.3" cy="11.5" r="0.500" fill="#999"/><ellipse cx="10.2" cy="13.2" rx="1.9" ry="1.5" fill="#fff"/><circle cx="10.5" cy="13.2" r="0.500" fill="#999"/></svg>
<div class="t" style="left:819.56px;top:869.55px;font-size:15.7px;color:#25282d;letter-spacing:0.440px;">10/15/2025, 19:45</div>
<svg style="left:1027.7px;top:866.6px" width="84.2" height="18" viewBox="0 0 84.2 18" ><path d="M8.50 0.90 L10.97 5.80 L16.39 6.64 L12.49 10.50 L13.38 15.91 L8.50 13.40 L3.62 15.91 L4.51 10.50 L0.61 6.64 L6.03 5.80Z" fill="url(#sg)" stroke="#f3c24d" stroke-width="0.900" stroke-linejoin="round"/><path d="M25.30 0.90 L27.77 5.80 L33.19 6.64 L29.29 10.50 L30.18 15.91 L25.30 13.40 L20.42 15.91 L21.31 10.50 L17.41 6.64 L22.83 5.80Z" fill="url(#sg)" stroke="#f3c24d" stroke-width="0.900" stroke-linejoin="round"/><path d="M42.10 0.90 L44.57 5.80 L49.99 6.64 L46.09 10.50 L46.98 15.91 L42.10 13.40 L37.22 15.91 L38.11 10.50 L34.21 6.64 L39.63 5.80Z" fill="url(#sg)" stroke="#f3c24d" stroke-width="0.900" stroke-linejoin="round"/><path d="M58.90 0.90 L61.37 5.80 L66.79 6.64 L62.89 10.50 L63.78 15.91 L58.90 13.40 L54.02 15.91 L54.91 10.50 L51.01 6.64 L56.43 5.80Z" fill="url(#sg)" stroke="#f3c24d" stroke-width="0.900" stroke-linejoin="round"/><path d="M75.70 0.90 L78.17 5.80 L83.59 6.64 L79.69 10.50 L80.58 15.91 L75.70 13.40 L70.82 15.91 L71.71 10.50 L67.81 6.64 L73.23 5.80Z" fill="url(#sg)" stroke="#f3c24d" stroke-width="0.900" stroke-linejoin="round"/></svg>
<div class="t" style="left:1514.00px;top:868.10px;font-size:16px;color:#2b2e34;font-weight:bold;-webkit-text-stroke:0;">-</div>
<div class="abs" style="left:87px;top:911.13px;width:1893px;height:70.9px;background:#fafafa"></div>
<svg style="left:106.1px;top:935.3px" width="22" height="22" viewBox="0 0 22 22" ><circle cx="11" cy="11" r="9.900" fill="none" stroke="#2563eb" stroke-width="1.750"/><path d="M8.300 6.400V15.600L15.500 11Z" fill="none" stroke="#2563eb" stroke-width="1.700" stroke-linejoin="round"/></svg>
<svg style="left:139.8px;top:932.9px" width="26" height="26" viewBox="0 0 26 26" ><circle cx="13" cy="13" r="13" fill="#a9c0f5"/><path d="M7 3.500 L9 7 Q12.500 5.500 15 6.500 L16 3.200 L17.500 7.300 Q21 10 19.500 15 Q21 17 22.500 15.500 L23 17 Q22 21 20 22.500 Q18 25.500 13.500 25.500 Q8 25.500 8 24 Q8 21.500 9.500 20 Q4.500 17 5.500 11.500 Q6 8.500 7.500 7.500Z" fill="#050505"/><ellipse cx="9.7" cy="12.8" rx="1.9" ry="1.5" fill="#fff"/><circle cx="10.0" cy="12.8" r="0.500" fill="#999"/><ellipse cx="16.4" cy="12.2" rx="1.9" ry="1.5" fill="#fff"/><circle cx="16.7" cy="12.2" r="0.500" fill="#999"/></svg>
<div class="t" style="left:819.56px;top:939.64px;font-size:15.7px;color:#25282d;letter-spacing:0.428px;">10/15/2025, 18:34</div>
<svg style="left:1027.7px;top:936.7px" width="67.4" height="18" viewBox="0 0 67.4 18" ><path d="M8.50 0.90 L10.97 5.80 L16.39 6.64 L12.49 10.50 L13.38 15.91 L8.50 13.40 L3.62 15.91 L4.51 10.50 L0.61 6.64 L6.03 5.80Z" fill="url(#sg)" stroke="#f3c24d" stroke-width="0.900" stroke-linejoin="round"/><path d="M25.30 0.90 L27.77 5.80 L33.19 6.64 L29.29 10.50 L30.18 15.91 L25.30 13.40 L20.42 15.91 L21.31 10.50 L17.41 6.64 L22.83 5.80Z" fill="url(#sg)" stroke="#f3c24d" stroke-width="0.900" stroke-linejoin="round"/><path d="M42.10 0.90 L44.57 5.80 L49.99 6.64 L46.09 10.50 L46.98 15.91 L42.10 13.40 L37.22 15.91 L38.11 10.50 L34.21 6.64 L39.63 5.80Z" fill="url(#sg)" stroke="#f3c24d" stroke-width="0.900" stroke-linejoin="round"/><path d="M58.90 0.90 L61.37 5.80 L66.79 6.64 L62.89 10.50 L63.78 15.91 L58.90 13.40 L54.02 15.91 L54.91 10.50 L51.01 6.64 L56.43 5.80Z" fill="url(#sg)" stroke="#f3c24d" stroke-width="0.900" stroke-linejoin="round"/></svg>
<div class="t" style="left:1514.00px;top:938.19px;font-size:16px;color:#2b2e34;font-weight:bold;-webkit-text-stroke:0;">-</div>
<svg style="left:106.1px;top:1005.4px" width="22" height="22" viewBox="0 0 22 22" ><circle cx="11" cy="11" r="9.900" fill="none" stroke="#2563eb" stroke-width="1.750"/><path d="M8.300 6.400V15.600L15.500 11Z" fill="none" stroke="#2563eb" stroke-width="1.700" stroke-linejoin="round"/></svg>
<svg style="left:139.8px;top:1003.0px" width="26" height="26" viewBox="0 0 26 26" ><circle cx="13" cy="13" r="13" fill="#c7d5f8"/><path d="M6 3.500 L8 7 Q12 5.500 14.500 6.500 L15 3.200 L16.800 7.300 Q20.500 10 19 15 Q20.500 17.500 21.500 16 L22 17.500 Q21.500 21 19.500 22.500 Q18 25.500 13 25.500 Q7 25.500 7 24 Q7 21.500 8.500 20 Q3.500 17 4.500 11.500 Q5 8.500 6.500 7.500Z" fill="#050505"/><ellipse cx="8.7" cy="13.2" rx="1.9" ry="1.5" fill="#fff"/><circle cx="9.0" cy="13.2" r="0.500" fill="#999"/><ellipse cx="15.4" cy="12.5" rx="1.9" ry="1.5" fill="#fff"/><circle cx="15.700000000000001" cy="12.5" r="0.500" fill="#999"/></svg>
<div class="t" style="left:819.56px;top:1009.73px;font-size:15.7px;color:#25282d;letter-spacing:0.428px;">10/15/2025, 15:54</div>
<svg style="left:1027.7px;top:1006.8px" width="67.4" height="18" viewBox="0 0 67.4 18" ><path d="M8.50 0.90 L10.97 5.80 L16.39 6.64 L12.49 10.50 L13.38 15.91 L8.50 13.40 L3.62 15.91 L4.51 10.50 L0.61 6.64 L6.03 5.80Z" fill="url(#sg)" stroke="#f3c24d" stroke-width="0.900" stroke-linejoin="round"/><path d="M25.30 0.90 L27.77 5.80 L33.19 6.64 L29.29 10.50 L30.18 15.91 L25.30 13.40 L20.42 15.91 L21.31 10.50 L17.41 6.64 L22.83 5.80Z" fill="url(#sg)" stroke="#f3c24d" stroke-width="0.900" stroke-linejoin="round"/><path d="M42.10 0.90 L44.57 5.80 L49.99 6.64 L46.09 10.50 L46.98 15.91 L42.10 13.40 L37.22 15.91 L38.11 10.50 L34.21 6.64 L39.63 5.80Z" fill="url(#sg)" stroke="#f3c24d" stroke-width="0.900" stroke-linejoin="round"/><path d="M58.90 0.90 L61.37 5.80 L66.79 6.64 L62.89 10.50 L63.78 15.91 L58.90 13.40 L54.02 15.91 L54.91 10.50 L51.01 6.64 L56.43 5.80Z" fill="url(#sg)" stroke="#f3c24d" stroke-width="0.900" stroke-linejoin="round"/></svg>
<div class="t" style="left:1514.00px;top:1008.28px;font-size:16px;color:#2b2e34;font-weight:bold;-webkit-text-stroke:0;">-</div>
<div class="abs" style="left:87px;top:1051.31px;width:1893px;height:70.9px;background:#fafafa"></div>
<svg style="left:106.1px;top:1075.5px" width="22" height="22" viewBox="0 0 22 22" ><circle cx="11" cy="11" r="9.900" fill="none" stroke="#2563eb" stroke-width="1.750"/><path d="M8.300 6.400V15.600L15.500 11Z" fill="none" stroke="#2563eb" stroke-width="1.700" stroke-linejoin="round"/></svg>
<svg style="left:139.8px;top:1073.1px" width="26" height="26" viewBox="0 0 26 26" ><circle cx="13" cy="13" r="13" fill="#e3e5ee"/><path d="M4.500 3.500 Q13 -3 21.500 3.500 L20.500 5 Q21.500 9 19.500 12 L18.300 12.300 L17.800 16.500 L16.300 12.800 L10 12.800 L9 16.500 L8 12.500 Q4.500 9.500 5.500 5 Z" fill="#050505"/><ellipse cx="9.8" cy="8.5" rx="1.9" ry="1.5" fill="#fff"/><circle cx="10.100000000000001" cy="8.5" r="0.500" fill="#999"/><ellipse cx="16.4" cy="8.5" rx="1.9" ry="1.5" fill="#fff"/><circle cx="16.7" cy="8.5" r="0.500" fill="#999"/></svg>
<div class="t" style="left:819.56px;top:1079.82px;font-size:15.7px;color:#25282d;letter-spacing:0.440px;">10/15/2025, 06:48</div>
<svg style="left:1027.7px;top:1076.9px" width="84.2" height="18" viewBox="0 0 84.2 18" ><path d="M8.50 0.90 L10.97 5.80 L16.39 6.64 L12.49 10.50 L13.38 15.91 L8.50 13.40 L3.62 15.91 L4.51 10.50 L0.61 6.64 L6.03 5.80Z" fill="url(#sg)" stroke="#f3c24d" stroke-width="0.900" stroke-linejoin="round"/><path d="M25.30 0.90 L27.77 5.80 L33.19 6.64 L29.29 10.50 L30.18 15.91 L25.30 13.40 L20.42 15.91 L21.31 10.50 L17.41 6.64 L22.83 5.80Z" fill="url(#sg)" stroke="#f3c24d" stroke-width="0.900" stroke-linejoin="round"/><path d="M42.10 0.90 L44.57 5.80 L49.99 6.64 L46.09 10.50 L46.98 15.91 L42.10 13.40 L37.22 15.91 L38.11 10.50 L34.21 6.64 L39.63 5.80Z" fill="url(#sg)" stroke="#f3c24d" stroke-width="0.900" stroke-linejoin="round"/><path d="M58.90 0.90 L61.37 5.80 L66.79 6.64 L62.89 10.50 L63.78 15.91 L58.90 13.40 L54.02 15.91 L54.91 10.50 L51.01 6.64 L56.43 5.80Z" fill="url(#sg)" stroke="#f3c24d" stroke-width="0.900" stroke-linejoin="round"/><path d="M75.70 0.90 L78.17 5.80 L83.59 6.64 L79.69 10.50 L80.58 15.91 L75.70 13.40 L70.82 15.91 L71.71 10.50 L67.81 6.64 L73.23 5.80Z" fill="url(#sg)" stroke="#f3c24d" stroke-width="0.900" stroke-linejoin="round"/></svg>
<div class="t" style="left:1514.00px;top:1078.37px;font-size:16px;color:#2b2e34;font-weight:bold;-webkit-text-stroke:0;">-</div>
<svg style="left:106.1px;top:1145.6px" width="22" height="22" viewBox="0 0 22 22" ><circle cx="11" cy="11" r="9.900" fill="none" stroke="#2563eb" stroke-width="1.750"/><path d="M8.300 6.400V15.600L15.500 11Z" fill="none" stroke="#2563eb" stroke-width="1.700" stroke-linejoin="round"/></svg>
<svg style="left:139.8px;top:1143.2px" width="26" height="26" viewBox="0 0 26 26" ><circle cx="13" cy="13" r="13" fill="#c7d5f8"/><path d="M11.500 5 L13 8.300 Q16 7.300 18.500 8.200 L19.800 5 L21 8.800 Q24.500 11.500 23.500 16 Q23 18 21.500 19.500 Q23 22 22 24 Q18 26.500 13 26 Q8.500 25.500 8.500 24.500 Q8.500 21.500 10.500 20.500 Q7.500 18 8 13.500 Q8.500 10 11 8.800Z" fill="#050505"/><ellipse cx="12.7" cy="13.8" rx="1.9" ry="1.5" fill="#fff"/><circle cx="13.0" cy="13.8" r="0.500" fill="#999"/><ellipse cx="19.3" cy="13.6" rx="1.9" ry="1.5" fill="#fff"/><circle cx="19.6" cy="13.6" r="0.500" fill="#999"/></svg>
<div class="t" style="left:819.56px;top:1149.91px;font-size:15.7px;color:#25282d;letter-spacing:0.445px;">10/15/2025, 04:29</div>
<svg style="left:1027.7px;top:1147.0px" width="50.6" height="18" viewBox="0 0 50.6 18" ><path d="M8.50 0.90 L10.97 5.80 L16.39 6.64 L12.49 10.50 L13.38 15.91 L8.50 13.40 L3.62 15.91 L4.51 10.50 L0.61 6.64 L6.03 5.80Z" fill="url(#sg)" stroke="#f3c24d" stroke-width="0.900" stroke-linejoin="round"/><path d="M25.30 0.90 L27.77 5.80 L33.19 6.64 L29.29 10.50 L30.18 15.91 L25.30 13.40 L20.42 15.91 L21.31 10.50 L17.41 6.64 L22.83 5.80Z" fill="url(#sg)" stroke="#f3c24d" stroke-width="0.900" stroke-linejoin="round"/><path d="M42.10 0.90 L44.57 5.80 L49.99 6.64 L46.09 10.50 L46.98 15.91 L42.10 13.40 L37.22 15.91 L38.11 10.50 L34.21 6.64 L39.63 5.80Z" fill="url(#sg)" stroke="#f3c24d" stroke-width="0.900" stroke-linejoin="round"/></svg>
<div class="t" style="left:1513.68px;top:1149.91px;font-size:15.7px;color:#25282d;letter-spacing:-0.141px;">More actionable insights, e.g. next steps etc. ...  to delve into next</div>
<div class="abs" style="left:87px;top:1191.49px;width:1893px;height:71.1px;background:#fafafa"></div>
<svg style="left:106.1px;top:1215.7px" width="22" height="22" viewBox="0 0 22 22" ><circle cx="11" cy="11" r="9.900" fill="none" stroke="#2563eb" stroke-width="1.750"/><path d="M8.300 6.400V15.600L15.500 11Z" fill="none" stroke="#2563eb" stroke-width="1.700" stroke-linejoin="round"/></svg>
<svg style="left:139.8px;top:1213.3px" width="26" height="26" viewBox="0 0 26 26" ><circle cx="13" cy="13" r="13" fill="#c7d5f8"/><path d="M14 5 L15.500 7.500 Q18 6.500 20 7 L21 4.500 L22.500 7.500 Q27.500 12 25 19 Q23 24 17.500 25.500 Q13 26 12 23.500 Q12.500 21.500 14.500 20.500 Q10.500 17.500 11.500 12 Q12 8.500 14 7.500Z" fill="#050505"/><ellipse cx="15.5" cy="13.2" rx="1.9" ry="1.5" fill="#fff"/><circle cx="15.8" cy="13.2" r="0.500" fill="#999"/><ellipse cx="22" cy="12.8" rx="1.9" ry="1.5" fill="#fff"/><circle cx="22.3" cy="12.8" r="0.500" fill="#999"/></svg>
<div class="t" style="left:819.56px;top:1220.00px;font-size:15.7px;color:#25282d;letter-spacing:0.440px;">10/15/2025, 03:05</div>
<svg style="left:1027.7px;top:1217.1px" width="84.2" height="18" viewBox="0 0 84.2 18" ><path d="M8.50 0.90 L10.97 5.80 L16.39 6.64 L12.49 10.50 L13.38 15.91 L8.50 13.40 L3.62 15.91 L4.51 10.50 L0.61 6.64 L6.03 5.80Z" fill="url(#sg)" stroke="#f3c24d" stroke-width="0.900" stroke-linejoin="round"/><path d="M25.30 0.90 L27.77 5.80 L33.19 6.64 L29.29 10.50 L30.18 15.91 L25.30 13.40 L20.42 15.91 L21.31 10.50 L17.41 6.64 L22.83 5.80Z" fill="url(#sg)" stroke="#f3c24d" stroke-width="0.900" stroke-linejoin="round"/><path d="M42.10 0.90 L44.57 5.80 L49.99 6.64 L46.09 10.50 L46.98 15.91 L42.10 13.40 L37.22 15.91 L38.11 10.50 L34.21 6.64 L39.63 5.80Z" fill="url(#sg)" stroke="#f3c24d" stroke-width="0.900" stroke-linejoin="round"/><path d="M58.90 0.90 L61.37 5.80 L66.79 6.64 L62.89 10.50 L63.78 15.91 L58.90 13.40 L54.02 15.91 L54.91 10.50 L51.01 6.64 L56.43 5.80Z" fill="url(#sg)" stroke="#f3c24d" stroke-width="0.900" stroke-linejoin="round"/><path d="M75.70 0.90 L78.17 5.80 L83.59 6.64 L79.69 10.50 L80.58 15.91 L75.70 13.40 L70.82 15.91 L71.71 10.50 L67.81 6.64 L73.23 5.80Z" fill="url(#sg)" stroke="#f3c24d" stroke-width="0.900" stroke-linejoin="round"/></svg>
<div class="t" style="left:1514.00px;top:1218.55px;font-size:16px;color:#2b2e34;font-weight:bold;-webkit-text-stroke:0;">-</div>
<div class="abs" style="left:173.800px;top:428px;width:232.600px;height:814px;background:#ebebeb"></div>
<div class="abs" style="left:574.300px;top:430px;width:147.700px;height:811px;background:#ebebeb"></div>
<div class="abs" style="left:87px;top:1261.600px;width:1893px;height:52.400px;background:#fff;border-top:1px solid #dfe1e4;border-radius:0 0 8px 8px"></div>
<div class="t" style="left:1456.25px;top:1282.79px;font-size:13.6px;color:#34373c;letter-spacing:-0.025px;">Page Size:</div>
<svg style="left:1573.8px;top:1285.6px" width="9.6" height="6.2" viewBox="0 0 10 6" ><path d="M0 0H10L5 6Z" fill="#1f2328"/></svg>
<div class="t" style="left:1632.92px;top:1282.79px;font-size:13.6px;color:#34373c;letter-spacing:0.442px;"><b>1</b> to <b>12</b> of <b>43</b></div>
<svg style="left:1764px;top:1283px" width="11" height="12" viewBox="0 0 11 12" ><path d="M1.500 1V11 M9.500 1.500L4.800 6L9.500 10.500" fill="none" stroke="#1f2328" stroke-width="1.700"/></svg>
<svg style="left:1796.5px;top:1283px" width="8" height="12" viewBox="0 0 8 12" ><path d="M6.800 1L1.800 6L6.800 11" fill="none" stroke="#1f2328" stroke-width="1.700"/></svg>
<div class="t" style="left:1821.65px;top:1282.79px;font-size:13.6px;color:#34373c;letter-spacing:0.112px;">Page <b>1</b> of <b>4</b></div>
<svg style="left:1910.7px;top:1283px" width="8" height="12" viewBox="0 0 8 12" ><path d="M1.200 1L6.200 6L1.200 11" fill="none" stroke="#1f2328" stroke-width="1.700"/></svg>
<svg style="left:1940.3px;top:1283px" width="11" height="12" viewBox="0 0 11 12" ><path d="M9.500 1V11 M1.500 1.500L6.200 6L1.500 10.500" fill="none" stroke="#1f2328" stroke-width="1.700"/></svg>
</div>
<div id="edge">

<div class="abs" style="left:0;top:1264px;width:1999px;height:62px;background:linear-gradient(to bottom,rgba(105,108,118,0) 0%,rgba(105,108,118,0.035) 30%,rgba(105,108,118,0.10) 65%,rgba(105,108,118,0.20) 100%);-webkit-mask-image:linear-gradient(to right,#000 0,#000 1660px,transparent 1900px);mask-image:linear-gradient(to right,#000 0,#000 1660px,transparent 1900px);pointer-events:none"></div>
<div class="abs" style="left:1997.500px;top:920px;width:1.500px;height:406px;background:linear-gradient(to bottom,rgba(40,42,50,0) 0%,rgba(40,42,50,0.55) 100%);pointer-events:none"></div>
<svg style="left:0;top:0" width="1999" height="1326" viewBox="0 0 1999 1326"><path d="M0 1326V1312Q0 1324.500 12.500 1324.500H1983Q1999.500 1324.500 1999.500 1307V1326Z" fill="#000"/></svg>

</div>
</body>
</html>
